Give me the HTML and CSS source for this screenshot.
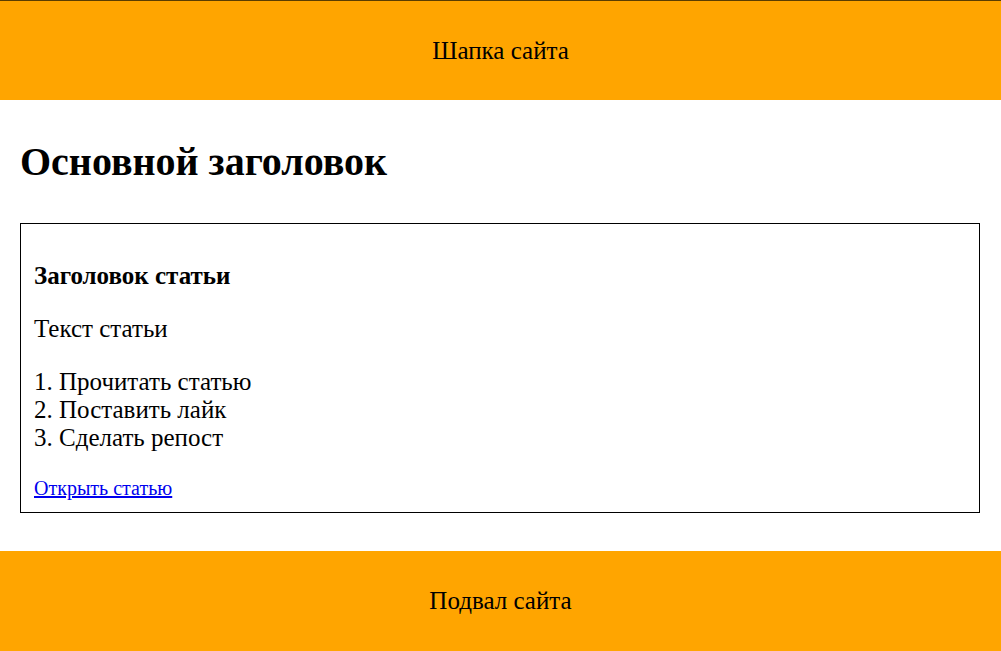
FILE: index.html
```html
<!DOCTYPE html>
<html lang="ru">
<head>
<meta charset="utf-8">
<title>Страница</title>
<link rel="stylesheet" href="styles.css">
</head>
<body>
<header class="site-header">Шапка сайта</header>
<main class="content">
  <h1 class="main-title">Основной заголовок</h1>
  <article class="article">
    <h3 class="article-title">Заголовок статьи</h3>
    <p class="article-text">Текст статьи</p>
    <p class="article-list">1. Прочитать статью<br>2. Поставить лайк<br>3. Сделать репост</p>
    <a class="article-link" href="#">Открыть статью</a>
  </article>
</main>
<footer class="site-footer">Подвал сайта</footer>
</body>
</html>
```
FILE: styles.css
```css
html, body {
  margin: 0;
  padding: 0;
}
body {
  font-family: "Liberation Serif", "Times New Roman", serif;
  font-size: 20px;
  color: #000;
  background: #fff;
}
.site-header,
.site-footer {
  box-sizing: border-box;
  background: #ffa500;
  height: 100px;
  display: flex;
  align-items: center;
  justify-content: center;
  font-size: 25px;
}
.site-header {
  border-top: 1px solid #5a3d00;
}
.content {
  padding: 20px 21px 38px 20px;
}
.main-title {
  font-size: 40px;
  line-height: 46px;
  margin: 19px 0 38px;
}
.article {
  border: 1px solid #000;
  padding: 13px 13px 12px;
}
.article-title {
  font-size: 25px;
  line-height: 28px;
  margin: 25px 0;
}
.article-text,
.article-list {
  font-size: 25px;
  line-height: 28px;
  margin: 25px 0;
}
.article-link {
  color: #0000ee;
}
```
